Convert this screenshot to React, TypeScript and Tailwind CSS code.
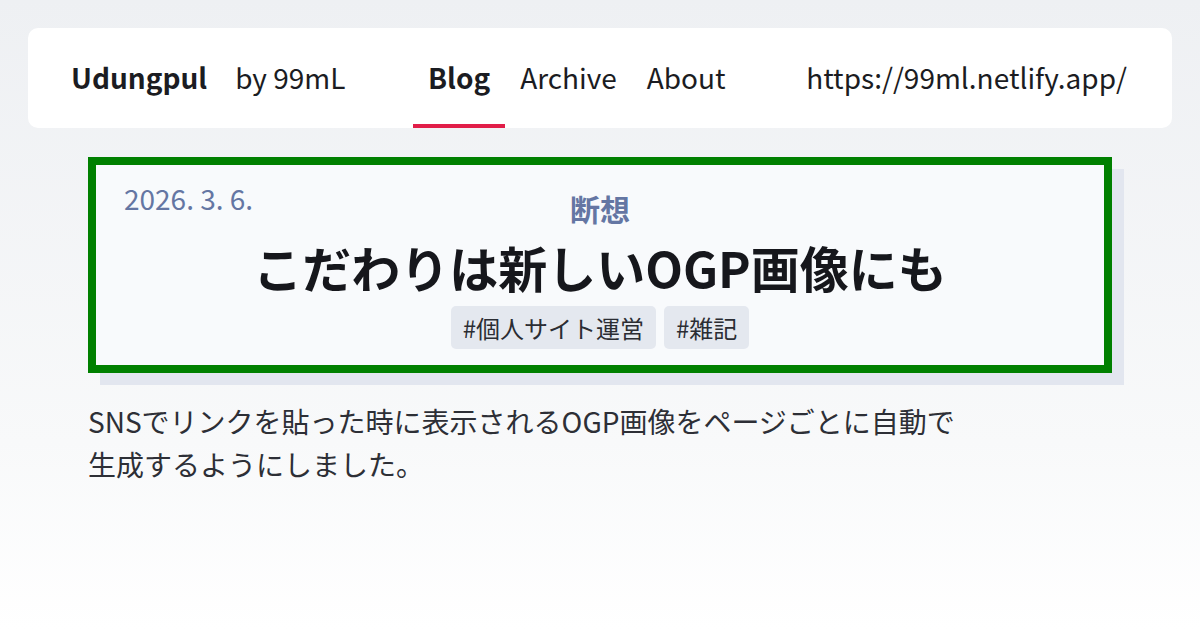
import React from "react";

const font = { fontFamily: '"Noto Sans CJK JP", "Noto Sans", sans-serif' };

export default function App() {
  return (
    <div
      style={font}
      className="w-full min-h-[630px] bg-linear-to-b from-[#eef0f3] via-[#f8f9fa] via-70% to-white px-[28px] pt-[28px]"
    >
      <header className="h-[100px] bg-white rounded-[10px] flex items-center justify-between pl-[43px] pr-[45px] text-[28px] text-[#1b1c22]">
        <div className="flex items-center gap-[28px] -mt-[2px]">
          <span className="font-bold">Udungpul</span>
          <span>by 99mL</span>
        </div>
        <nav className="flex h-full items-stretch ml-[2px]">
          <a className="relative flex items-center px-[15px] font-bold">
            <span className="-mt-[2px]">Blog</span>
            <span className="absolute left-0 right-0 bottom-0 h-[4px] bg-[#e11d48]" />
          </a>
          <a className="flex items-center px-[15px]"><span className="-mt-[2px]">Archive</span></a>
          <a className="flex items-center px-[15px]"><span className="-mt-[2px]">About</span></a>
        </nav>
        <span className="-mt-[2px]">https://99ml.netlify.app/</span>
      </header>

      <main className="mx-[60px] mt-[29px]">
        <div className="relative h-[216px] border-[8px] border-[#008000] bg-[#f8fafc] shadow-[12px_12px_0_0_#e2e6ef] flex flex-col items-center pt-[26px]">
          <span className="absolute left-[28px] top-[16px] text-[28px] leading-[34px] text-[#6476a3]">
            2026. 3. 6.
          </span>
          <div className="text-[30px] leading-[34px] font-bold text-[#6476a3]">断想</div>
          <h1 className="mt-[13px] text-[49px] leading-[58px] font-bold text-[#16171c]">
            こだわりは新しいOGP画像にも
          </h1>
          <div className="mt-[10px] flex gap-[8px]">
            <span className="h-[43px] flex items-center px-[12px] rounded-[5px] bg-[#e4e8ef] text-[24px] text-[#2b2d33]">
              #個人サイト運営
            </span>
            <span className="h-[43px] flex items-center px-[12px] rounded-[5px] bg-[#e4e8ef] text-[24px] text-[#2b2d33]">
              #雑記
            </span>
          </div>
        </div>
        <p className="mt-[27px] text-[28px] leading-[43px] text-[#2d2f36]">
          SNSでリンクを貼った時に表示されるOGP画像をページごとに自動で
          <br />
          生成するようにしました。
        </p>
      </main>
    </div>
  );
}
